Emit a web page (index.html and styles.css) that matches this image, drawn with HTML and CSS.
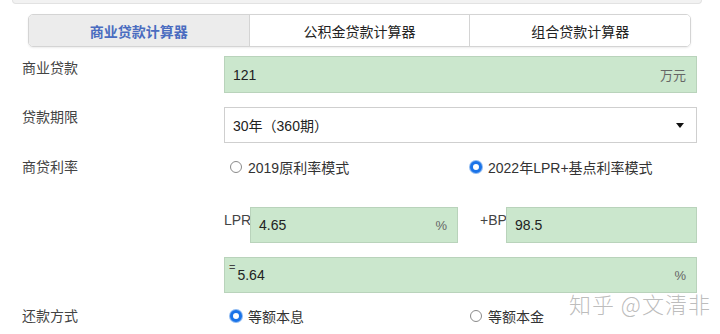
FILE: index.html
```html
<!DOCTYPE html>
<html lang="zh-CN">
<head>
    <meta charset="UTF-8">
    <title>商业贷款计算器</title>
    <link rel="stylesheet" href="styles.css">
</head>
<body>
    <div class="page">
        <div class="top-strip"></div>

        <div class="tabs">
            <div class="tab active">商业贷款计算器</div>
            <div class="tab">公积金贷款计算器</div>
            <div class="tab">组合贷款计算器</div>
        </div>

        <div class="form">
            <div class="row row-field">
                <div class="label">商业贷款</div>
                <div class="box green">
                    <span class="value">121</span>
                    <span class="unit">万元</span>
                </div>
            </div>

            <div class="row row-select">
                <div class="label">贷款期限</div>
                <div class="box select">
                    <span class="value">30年（360期）</span>
                    <span class="arrow"></span>
                </div>
            </div>

            <div class="row row-radio">
                <div class="label">商贷利率</div>
                <div class="radios">
                    <label class="radio"><span class="dot"></span>2019原利率模式</label>
                    <label class="radio"><span class="dot checked"></span>2022年LPR+基点利率模式</label>
                </div>
            </div>

            <div class="row row-lpr">
                <div class="label"></div>
                <div class="lpr">
                    <span class="tag">LPR</span>
                    <div class="box green lpr-box">
                        <span class="value">4.65</span>
                        <span class="unit">%</span>
                    </div>
                    <span class="tag bp-tag">+BP</span>
                    <div class="box green bp-box">
                        <span class="value">98.5</span>
                    </div>
                </div>
            </div>

            <div class="row row-total">
                <div class="label"></div>
                <div class="box green total">
                    <span class="eq">=</span>
                    <span class="value">5.64</span>
                    <span class="unit">%</span>
                </div>
            </div>

            <div class="row row-radio last">
                <div class="label">还款方式</div>
                <div class="radios">
                    <label class="radio"><span class="dot checked"></span>等额本息</label>
                    <label class="radio"><span class="dot"></span>等额本金</label>
                </div>
            </div>
        </div>

        <div class="watermark">知乎 @文清非</div>
    </div>
</body>
</html>
```

FILE: styles.css
```css
body {
    margin: 0;
    background-color: #fff;
    color: #333;
    font-family: Arial, "Liberation Sans", "Noto Sans CJK SC", sans-serif;
    font-size: 13px;
}
.page {
    position: relative;
    width: 720px;
    height: 334px;
    overflow: hidden;
}
.top-strip {
    height: 3px;
    margin: 0 18px 0 12px;
    background-color: #f2f2f2;
    border: 1px solid #e2e2e2;
    border-top: none;
    border-radius: 0 0 4px 4px;
}
.tabs {
    display: flex;
    margin: 10px 29px 0 28px;
    height: 31px;
    border: 1px solid #d4d4d4;
    border-radius: 5px;
    overflow: hidden;
    box-shadow: 0 1px 2px rgba(0, 0, 0, 0.08);
}
.tab {
    flex: 1;
    display: flex;
    align-items: center;
    justify-content: center;
    font-size: 14px;
    color: #222;
    background-color: #fff;
    border-left: 1px solid #d4d4d4;
}
.tab:first-child {
    border-left: none;
}
.tab.active {
    background-color: #ececec;
    color: #4a6cc0;
    font-weight: bold;
}
.form {
    padding-left: 22px;
    width: 675px;
}
.row {
    display: flex;
}
.label {
    width: 202px;
    flex: none;
    font-size: 14px;
    line-height: 18px;
    color: #444;
}
.box {
    flex: 1;
    display: flex;
    align-items: center;
    height: 35px;
    padding: 0 10px 0 8px;
    box-sizing: border-box;
    border: 1px solid #b9d3bb;
}
.green {
    background-color: #cbe7cd;
}
.value {
    flex: 1;
    font-size: 14px;
    color: #222;
}
.unit {
    font-size: 13px;
    color: #666;
}
.row-field {
    margin-top: 9px;
}
.row-field .box {
    height: 37px;
}
.row-field .label {
    padding-top: 3px;
}
.row-select {
    margin-top: 14px;
}
.select {
    height: 36px;
    background-color: #fff;
    border-color: #cfcfcf;
}
.row-select .label {
    padding-top: 1px;
}
.arrow {
    width: 0;
    height: 0;
    border-left: 4px solid transparent;
    border-right: 4px solid transparent;
    border-top: 5px solid #111;
    margin-right: 2px;
}
.row-radio {
    margin-top: 15px;
    height: 18px;
    align-items: center;
}
.radios {
    flex: 1;
    display: grid;
    grid-template-columns: 240px 1fr;
    padding-left: 6px;
}
.radio {
    display: flex;
    align-items: center;
    font-size: 14px;
    color: #333;
}
.dot {
    width: 12px;
    height: 12px;
    border: 1px solid #8a8a8a;
    border-radius: 50%;
    margin-right: 6px;
    box-sizing: border-box;
    background-color: #fff;
}
.dot.checked {
    border: 3px solid #1a73e8;
    background-color: #fff;
    box-shadow: 0 0 0 1px #8cb9f2;
}
.row-lpr {
    margin-top: 31px;
}
.lpr {
    flex: 1;
    display: flex;
    align-items: flex-start;
}
.tag {
    width: 26px;
    flex: none;
    padding-top: 5px;
    font-size: 14px;
    color: #444;
}
.lpr-box {
    flex: none;
    width: 208px;
    height: 36px;
}
.bp-tag {
    margin-left: 22px;
}
.bp-box {
    height: 36px;
}
.row-total {
    margin-top: 14px;
}
.total {
    height: 36px;
    padding-left: 4px;
}
.total .eq {
    align-self: flex-start;
    font-size: 11px;
    line-height: 12px;
    margin-top: 3px;
    margin-right: 2px;
    color: #444;
}
.row-radio.last {
    margin-top: 14px;
}
.watermark {
    position: absolute;
    left: 569px;
    top: 290px;
    font-size: 22px;
    line-height: 26px;
    color: rgba(160, 160, 160, 0.7);
    font-family: "Noto Sans CJK SC", sans-serif;
    font-weight: 300;
    text-shadow: 0 0 2px #fff;
    letter-spacing: 1px;
}
```
